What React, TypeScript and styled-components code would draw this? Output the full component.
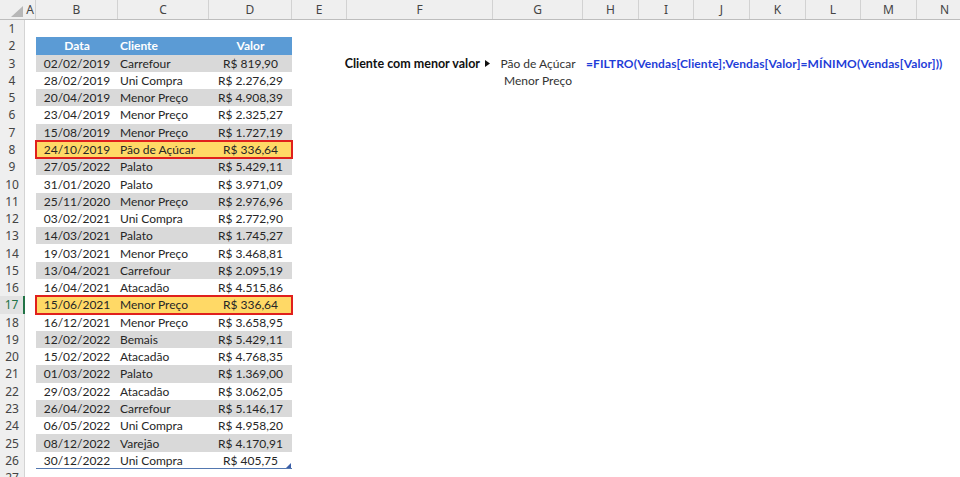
import React from 'react';
import styled, { createGlobalStyle, css } from 'styled-components';

const ROW_H = 17.28;
const HEAD_H = 20;

const COLS: [string, number][] = [
  ['A', 11], ['B', 82], ['C', 91], ['D', 83], ['E', 55], ['F', 146], ['G', 90],
  ['H', 56], ['I', 55], ['J', 56], ['K', 56], ['L', 55], ['M', 56], ['N', 56],
];

type Variant = 'head' | 'band' | 'plain' | 'hl';

const DATA: [string, string, string][] = [
  ['02/02/2019', 'Carrefour', 'R$ 819,90'],
  ['28/02/2019', 'Uni Compra', 'R$ 2.276,29'],
  ['20/04/2019', 'Menor Preço', 'R$ 4.908,39'],
  ['23/04/2019', 'Menor Preço', 'R$ 2.325,27'],
  ['15/08/2019', 'Menor Preço', 'R$ 1.727,19'],
  ['24/10/2019', 'Pão de Açúcar', 'R$ 336,64'],
  ['27/05/2022', 'Palato', 'R$ 5.429,11'],
  ['31/01/2020', 'Palato', 'R$ 3.971,09'],
  ['25/11/2020', 'Menor Preço', 'R$ 2.976,96'],
  ['03/02/2021', 'Uni Compra', 'R$ 2.772,90'],
  ['14/03/2021', 'Palato', 'R$ 1.745,27'],
  ['19/03/2021', 'Menor Preço', 'R$ 3.468,81'],
  ['13/04/2021', 'Carrefour', 'R$ 2.095,19'],
  ['16/04/2021', 'Atacadão', 'R$ 4.515,86'],
  ['15/06/2021', 'Menor Preço', 'R$ 336,64'],
  ['16/12/2021', 'Menor Preço', 'R$ 3.658,95'],
  ['12/02/2022', 'Bemais', 'R$ 5.429,11'],
  ['15/02/2022', 'Atacadão', 'R$ 4.768,35'],
  ['01/03/2022', 'Palato', 'R$ 1.369,00'],
  ['29/03/2022', 'Atacadão', 'R$ 3.062,05'],
  ['26/04/2022', 'Carrefour', 'R$ 5.146,17'],
  ['06/05/2022', 'Uni Compra', 'R$ 4.958,20'],
  ['08/12/2022', 'Varejão', 'R$ 4.170,91'],
  ['30/12/2022', 'Uni Compra', 'R$ 405,75'],
];

const HIGHLIGHT_ROWS = [8, 17];

const GlobalStyle = createGlobalStyle`
  html, body { margin: 0; padding: 0; background: #ffffff; overflow: hidden; }
  body { font-family: Lato, "Open Sans", sans-serif; }
`;

const Sheet = styled.div`
  width: 960px;
  height: 477px;
  overflow: hidden;
  background: #ffffff;
  display: flex;
  flex-direction: column;
  font-family: Lato, "Noto Sans", sans-serif;
  font-size: 12px;
  color: #262626;
`;

const ColHeader = styled.div`
  display: flex;
  height: ${HEAD_H}px;
  flex: none;
  background: #efefef;
  border-bottom: 1px solid #bdbdbd;
  box-sizing: border-box;
`;

const Corner = styled.div`
  width: 25px;
  flex: none;
  display: flex;
  align-items: flex-end;
  justify-content: flex-end;
  padding: 0 2px 2px 0;
  box-sizing: border-box;
`;

const ColHead = styled.div<{ $w: number }>`
  width: ${(p) => p.$w}px;
  flex: none;
  box-sizing: border-box;
  border-right: 1px solid #d2d2d2;
  display: flex;
  align-items: center;
  justify-content: center;
  font-size: 12px;
  color: #444;
  font-family: "Noto Sans", "Open Sans", sans-serif;
`;

const Body = styled.div`
  display: flex;
  flex-direction: column;
  flex: 1;
  overflow: hidden;
`;

const Row = styled.div`
  display: flex;
  height: ${ROW_H}px;
  flex: none;
`;

const RowHead = styled.div<{ $active?: boolean }>`
  width: 25px;
  flex: none;
  box-sizing: border-box;
  background: ${(p) => (p.$active ? '#e2e2e2' : '#efefef')};
  border-right: ${(p) => (p.$active ? '2px solid #217346' : '1px solid #d4d4d4')};
  display: flex;
  align-items: center;
  justify-content: center;
  font-size: 12px;
  color: ${(p) => (p.$active ? '#217346' : '#444')};
  font-family: "Noto Sans", "Open Sans", sans-serif;
`;

const Cell = styled.div<{ $w: number; $align?: 'left' | 'center' | 'right' }>`
  width: ${(p) => p.$w}px;
  flex: none;
  box-sizing: border-box;
  padding: 0 3px;
  display: flex;
  align-items: center;
  justify-content: ${(p) =>
    p.$align === 'center' ? 'center' : p.$align === 'right' ? 'flex-end' : 'flex-start'};
  white-space: nowrap;
  overflow: visible;
`;

const variantStyles: Record<Variant, ReturnType<typeof css>> = {
  head: css`
    background: #5b9bd5;
    color: #ffffff;
    font-weight: 700;
  `,
  band: css`
    background: #d9d9d9;
  `,
  plain: css`
    background: #ffffff;
  `,
  hl: css`
    background: #ffd966;
    outline: 2px solid #e0201c;
    outline-offset: -1px;
    z-index: 2;
  `,
};

const TableRow = styled.div<{ $variant: Variant; $last?: boolean }>`
  position: relative;
  display: grid;
  grid-template-columns: 82px 91px 83px;
  width: 256px;
  flex: none;
  ${(p) => variantStyles[p.$variant]}
  ${(p) =>
    p.$last &&
    css`
      box-shadow: inset 0 -1px 0 #5277b0;
    `}
`;

const TCell = styled.div<{ $align: 'left' | 'center' }>`
  display: flex;
  align-items: center;
  justify-content: ${(p) => (p.$align === 'center' ? 'center' : 'flex-start')};
  padding: 0 2px;
  white-space: nowrap;
`;

const ResizeHandle = styled.svg`
  position: absolute;
  right: 1px;
  bottom: 1px;
  width: 5px;
  height: 5px;
`;

const Label = styled.span`
  font-weight: 700;
  font-size: 12.5px;
  color: #111;
  display: inline-flex;
  align-items: center;
  gap: 5px;
`;

const Arrow = styled.svg`
  width: 5px;
  height: 7px;
`;

const Formula = styled.span`
  font-weight: 700;
  color: #1f3ed8;
  letter-spacing: 0.1px;
`;

const Result = styled.span`
  color: #333;
`;

const TriangleIcon = () => (
  <svg width="12" height="11" viewBox="0 0 12 11">
    <polygon points="12,0 12,11 0,11" fill="#b7b7b7" />
  </svg>
);

function tableRow(n: number) {
  if (n === 2) {
    return (
      <TableRow $variant="head">
        <TCell $align="center">Data</TCell>
        <TCell $align="left">Cliente</TCell>
        <TCell $align="center">Valor</TCell>
      </TableRow>
    );
  }
  if (n >= 3 && n <= 26) {
    const [d, c, v] = DATA[n - 3];
    const variant: Variant = HIGHLIGHT_ROWS.includes(n) ? 'hl' : n % 2 === 1 ? 'band' : 'plain';
    return (
      <TableRow $variant={variant} $last={n === 26}>
        <TCell $align="center">{d}</TCell>
        <TCell $align="left">{c}</TCell>
        <TCell $align="center">{v}</TCell>
        {n === 26 && (
          <ResizeHandle viewBox="0 0 5 5">
            <polygon points="5,0 5,5 0,5" fill="#3b5ea8" />
          </ResizeHandle>
        )}
      </TableRow>
    );
  }
  return <Cell $w={256} />;
}

export default function App() {
  const rows = Array.from({ length: 27 }, (_, i) => i + 1);
  return (
    <Sheet>
      <GlobalStyle />
      <ColHeader>
        <Corner>
          <TriangleIcon />
        </Corner>
        {COLS.map(([name, w]) => (
          <ColHead key={name} $w={w}>
            {name}
          </ColHead>
        ))}
      </ColHeader>
      <Body>
        {rows.map((n) => (
          <Row key={n}>
            <RowHead $active={n === 17}>{n}</RowHead>
            <Cell $w={11} />
            {tableRow(n)}
            <Cell $w={55} />
            {n === 3 && (
              <>
                <Cell $w={146} $align="right">
                  <Label>
                    Cliente com menor valor
                    <Arrow viewBox="0 0 5 7">
                      <polygon points="0,0 5,3.5 0,7" fill="#111" />
                    </Arrow>
                  </Label>
                </Cell>
                <Cell $w={90} $align="center">
                  <Result>Pão de Açúcar</Result>
                </Cell>
                <Cell $w={56}>
                  <Formula>=FILTRO(Vendas[Cliente];Vendas[Valor]=MÍNIMO(Vendas[Valor]))</Formula>
                </Cell>
              </>
            )}
            {n === 4 && (
              <>
                <Cell $w={146} />
                <Cell $w={90} $align="center">
                  <Result>Menor Preço</Result>
                </Cell>
              </>
            )}
          </Row>
        ))}
      </Body>
    </Sheet>
  );
}
